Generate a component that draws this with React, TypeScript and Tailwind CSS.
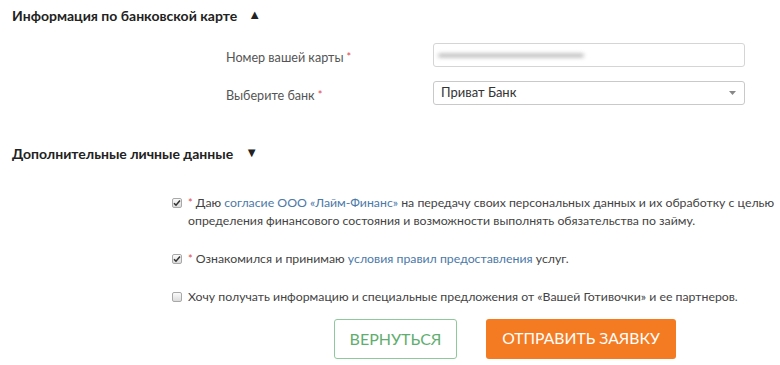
import React from 'react';

const Req: React.FC = () => <span className="text-[#e0474c] text-[11px] align-top ml-[3px]">*</span>;

const Box: React.FC<{ checked?: boolean }> = ({ checked = false }) => (
  <span className="mt-[4px] w-[10px] h-[10px] shrink-0 border border-[#a8a8a8] rounded-[2px] bg-gradient-to-b from-[#fbfbfb] to-[#dcdcdc] flex items-center justify-center">
    {checked && (
      <svg width="8" height="8" viewBox="0 0 8 8">
        <path d="M1 4.2 L3 6.2 L7 1.6" fill="none" stroke="#333" strokeWidth="1.6" />
      </svg>
    )}
  </span>
);

const Link: React.FC<{ children: React.ReactNode }> = ({ children }) => (
  <a href="#" className="text-[#4b79a8]">{children}</a>
);

export default function App() {
  return (
    <div className="w-[780px] h-[365px] overflow-hidden bg-white pl-[12px] text-[#444] font-['Lato','Open_Sans',sans-serif] text-[12.3px]">
      <h2 className="mt-[5px] h-[20px] flex items-center text-[14px] font-bold text-[#222]">
        Информация по банковской карте
        <span className="ml-[11px] text-[13px]">▲</span>
      </h2>

      <div className="mt-[18px] ml-[214px] flex flex-col gap-[14px]">
        <div className="flex items-center h-[24px]">
          <label className="w-[207px] pt-[7px] text-[#555] text-[12.6px]">
            Номер вашей карты<Req />
          </label>
          <div className="w-[312px] h-[24px] border border-[#d5d5d5] rounded-[3px] bg-white flex items-center px-[4px] overflow-hidden">
            <div className="w-[146px] h-[3px] rounded-full bg-[#8f8f8f] blur-[2px] opacity-80" />
          </div>
        </div>
        <div className="flex items-center h-[24px]">
          <label className="w-[207px] pt-[7px] text-[#555] text-[12.6px]">
            Выберите банк<Req />
          </label>
          <div className="w-[312px] h-[24px] border border-[#c9c9c9] rounded-[3px] bg-white flex items-center justify-between pl-[7px] pr-[8px]">
            <span className="text-[#333] text-[13px]">Приват Банк</span>
            <svg width="7" height="4" viewBox="0 0 7 4">
              <path d="M0 0 H7 L3.5 4 Z" fill="#888" />
            </svg>
          </div>
        </div>
      </div>

      <h2 className="mt-[38px] h-[20px] flex items-center text-[14px] font-bold text-[#222]">
        Дополнительные личные данные
        <span className="ml-[12px] text-[13px]">▼</span>
      </h2>

      <div className="mt-[31px] ml-[160px] flex flex-col gap-[20px] leading-[18px]">
        <div className="flex gap-[6px]">
          <Box checked />
          <p>
            <span className="text-[#e0474c] text-[11px] align-top">*</span>{' '}
            Даю <Link>согласие ООО «Лайм-Финанс»</Link> на передачу своих персональных данных и их обработку с целью
            <br />
            определения финансового состояния и возможности выполнять обязательства по займу.
          </p>
        </div>
        <div className="flex gap-[6px]">
          <Box checked />
          <p>
            <span className="text-[#e0474c] text-[11px] align-top">*</span>{' '}
            Ознакомился и принимаю <Link>условия правил предоставления</Link> услуг.
          </p>
        </div>
        <div className="flex gap-[6px]">
          <Box />
          <p>Хочу получать информацию и специальные предложения от «Вашей Готивочки» и ее партнеров.</p>
        </div>
      </div>

      <div className="mt-[13px] ml-[322px] flex gap-[29px]">
        <button className="w-[123px] h-[40px] border border-[#8fc99b] rounded-[3px] bg-white text-[#5fae6f] text-[16px] uppercase">
          Вернуться
        </button>
        <button className="w-[190px] h-[40px] rounded-[3px] bg-[#f47b22] text-white text-[15.7px] uppercase">
          Отправить заявку
        </button>
      </div>
    </div>
  );
}
